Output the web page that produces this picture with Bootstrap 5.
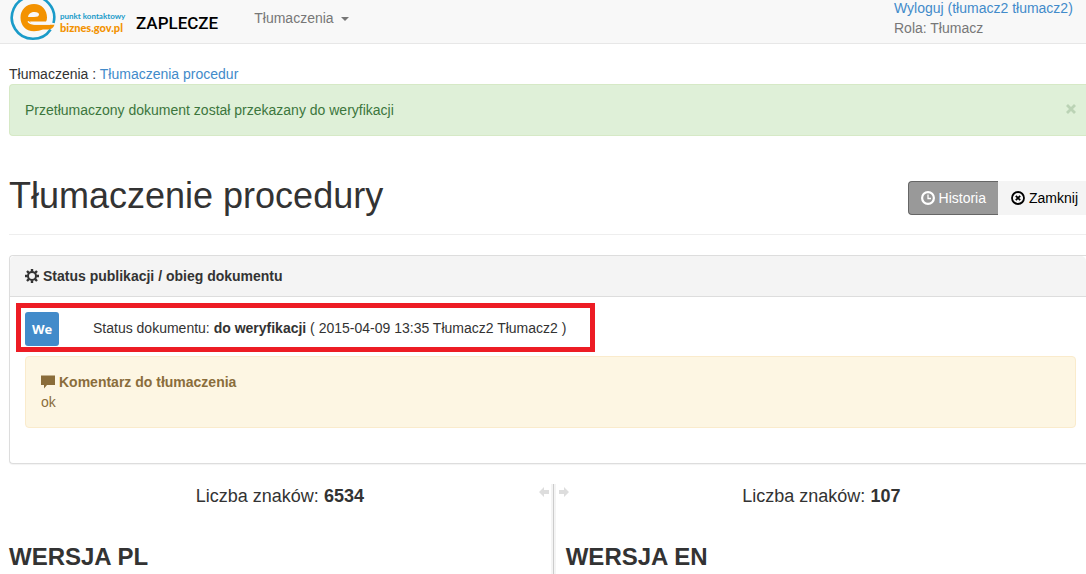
<!DOCTYPE html>
<html lang="pl">
<head>
<meta charset="utf-8">
<meta name="viewport" content="width=device-width, initial-scale=1">
<title>Tłumaczenie procedury</title>
<link href="https://cdn.jsdelivr.net/npm/bootstrap@5.3.0/dist/css/bootstrap.min.css" rel="stylesheet">
<style>
body{font-family:"Liberation Sans",Arial,sans-serif;font-size:14px;line-height:20px;color:#333;overflow-x:hidden}
a{color:#428bca;text-decoration:none}
svg{flex:none}
.topbar{margin-top:-7px;height:51px;background:#f8f8f8;border-bottom:1px solid #e7e7e7;color:#777;padding:0 10px}
.logo-text{padding-top:18px;margin-left:4px;width:65px}
.logo-a{font:700 8px/11px Lato,sans-serif;color:#1a9bc9;white-space:nowrap}
.logo-b{font:900 11px/11px Lato,sans-serif;color:#f39200;white-space:nowrap}
.brand-name{font:500 17px/20px Roboto,sans-serif;color:#000;margin-left:11px;padding-top:20px}
.topbar .nav-link{color:#777;padding:15px 0;margin-left:36px}
.topbar .dropdown-toggle::after{border-width:4px;border-bottom:0;margin-left:7px;vertical-align:2px}
.user-box{padding:5px 0;min-width:182px}
.page{padding:20px 0 0 9px}
.edge{border-right:0;border-top-right-radius:0;border-bottom-right-radius:0}
.alert{margin:0;padding:15px;border-radius:4px}
.alert-success{background:#dff0d8;border-color:#d6e9c6;color:#3c763d}
.alert-success.edge{border-right:0;border-radius:4px 0 0 4px;padding-right:10px}
.alert-warning{background:#fdf6e3;border-color:#faebcc;color:#8a6d3b}
.x-btn{border:0;background:none;padding:0;height:16px;line-height:14px;color:#bbd3b5}
.title-bar{padding:40px 0 19px;border-bottom:1px solid #eee}
h1{font-size:36px;line-height:39px;margin:0}
.title-bar .btn,.card-header,.comment b{display:flex;align-items:center;gap:4px}
.title-bar .btn{font-size:14px;line-height:20px;padding:6px 12px}
.title-bar .btn-hist{background:#999;border-color:#666;border-right:0;color:#fff;border-radius:4px 0 0 4px}
.title-bar .btn-doc{background:#f4f4f4;color:#000;border-color:#f4f4f4;border-right:0;border-radius:0;padding-right:8px}
.status-card{margin-top:20px;border-color:#ddd;border-radius:4px 0 0 4px;box-shadow:0 1px 1px rgba(0,0,0,.05)}
.status-card .card-header{background:#f4f4f4;border-color:#ddd;padding:10px 15px;font-weight:700}
.status-card .card-body{padding:6px 10px 35px 6px}
.marked{border:5px solid #ed1c24;padding:4px;width:579px;max-width:100%;height:49px}
.badge-we{width:34px;height:34px;background:#428bca;border-radius:3px;color:#fff;font:700 13px/34px "Open Sans",sans-serif;text-align:center}
.status-text{padding:6px 0 0 34px}
.comment{margin:4px 0 0 9px}
.count{font-size:18px;line-height:24px}
h2{font-size:24px;line-height:26px;font-weight:700;margin:36px 0 0}
.versions{margin-top:20px}
.split{width:5px;background:linear-gradient(90deg,#f4f4f4 2px,#ccc 2px,#ccc 3px,#f4f4f4 3px)}
.pane-l{flex:0 0 50.3%;padding-bottom:8px}
.pane-r{padding:0 9px 8px 10px}
.arrow{position:absolute;top:2px;width:10px;height:12px}
.arrow-l{right:2px}
.arrow-r{left:3px}
</style>
</head>
<body>
<nav class="topbar d-flex align-items-start">
  <a href="#" class="d-flex align-items-start">
    <svg width="46" height="50" viewBox="10 -7 46 50" fill="none" aria-hidden="true">
      <path d="M50.600 29.400A21.200 21.200 0 1 1 53.500 23" stroke="#1a9bc9" stroke-width="2.600"/>
      <path d="M34 4C42 4 47 10 47 17.500Q47 20.500 46 21.500H30Q31 24.800 36 24.800H54.500Q53 29.500 48 29.500H43Q39 31.300 34 31.300C25.500 31.300 20.500 25 20.500 17.500S26 4 34 4Z" fill="#f39200"/>
      <path d="M28 17C28.500 13.500 31 12 34.500 12Q39 12 39 14.500Q39 17 34 17Z" fill="#f8f8f8"/>
      <path d="M28 21.300Q30 24.200 35 24H50" stroke="#f8f8f8" stroke-width="1.400"/>
    </svg>
    <span class="logo-text d-flex flex-column"><span class="logo-a">punkt kontaktowy</span><span class="logo-b">biznes.gov.pl</span></span>
    <span class="brand-name">ZAPLECZE</span>
  </a>
  <a href="#" class="nav-link dropdown-toggle" data-bs-toggle="dropdown">Tłumaczenia</a>
  <div class="user-box ms-auto"><a href="#">Wyloguj (tłumacz2 tłumacz2)</a><br>Rola: Tłumacz</div>
</nav>
<main class="page">
  <div>Tłumaczenia : <a href="#">Tłumaczenia procedur</a></div>
  <div class="alert alert-success edge d-flex justify-content-between" role="alert">
    <span>Przetłumaczony dokument został przekazany do weryfikacji</span>
    <button type="button" class="x-btn" aria-label="Zamknij"><svg width="10" height="10" viewBox="0 0 10 10" stroke="currentColor" stroke-width="2.800"><path d="M1 1l8 8M9 1l-8 8"/></svg></button>
  </div>
  <div class="title-bar d-flex justify-content-between align-items-end">
    <h1>Tłumaczenie procedury</h1>
    <div class="d-flex">
      <button type="button" class="btn btn-hist"><svg width="14" height="14" viewBox="0 0 14 14" fill="none" stroke="currentColor"><circle cx="7" cy="7" r="5.900" stroke-width="2.200"/><path d="M7 3.500V7.500H10" stroke-width="1.300"/></svg>Historia</button>
      <button type="button" class="btn btn-doc"><svg width="14" height="14" viewBox="0 0 14 14" fill="none" stroke="currentColor"><circle cx="7" cy="7" r="6" stroke-width="1.800"/><path d="M4.800 4.800l4.400 4.400M9.200 4.800l-4.400 4.400" stroke-width="1.800"/></svg>Zamknij</button>
    </div>
  </div>
  <section class="card status-card edge">
    <div class="card-header"><svg width="14" height="14" viewBox="0 0 14 14" fill="none" stroke="currentColor"><circle cx="7" cy="7" r="4" stroke-width="2"/><path d="M7 0v2.500M7 11.500V14M0 7h2.500M11.500 7H14M2 2l1.800 1.800M10.200 10.200L12 12M2 12l1.800-1.800M10.200 3.800L12 2" stroke-width="2.400"/></svg>Status publikacji / obieg dokumentu</div>
    <div class="card-body">
      <div class="marked d-flex align-items-start"><span class="badge-we">We</span><span class="status-text">Status dokumentu: <b>do weryfikacji</b> ( 2015-04-09 13:35 Tłumacz2 Tłumacz2 )</span></div>
      <div class="alert alert-warning comment"><b><svg width="14" height="14" viewBox="0 0 14 14" fill="currentColor"><path d="M0 .500h14v9.500H6l-3 3.500v-3.500H0z"/></svg>Komentarz do tłumaczenia</b>ok</div>
    </div>
  </section>
  <div class="versions d-flex">
    <section class="pane-l position-relative">
      <div class="count text-center">Liczba znaków: <b>6534</b></div>
      <svg class="arrow arrow-l" viewBox="0 0 10 12" fill="#ddd"><path d="M0 6l5-5v3h5v4H5v3z"/></svg>
      <h2>WERSJA PL</h2>
    </section>
    <div class="split"></div>
    <section class="pane-r position-relative flex-fill">
      <div class="count text-center">Liczba znaków: <b>107</b></div>
      <svg class="arrow arrow-r" viewBox="0 0 10 12" fill="#ddd"><path d="M10 6L5 1v3H0v4h5v3z"/></svg>
      <h2>WERSJA EN</h2>
    </section>
  </div>
</main>
<script src="https://cdn.jsdelivr.net/npm/bootstrap@5.3.0/dist/js/bootstrap.bundle.min.js"></script>
</body>
</html>
